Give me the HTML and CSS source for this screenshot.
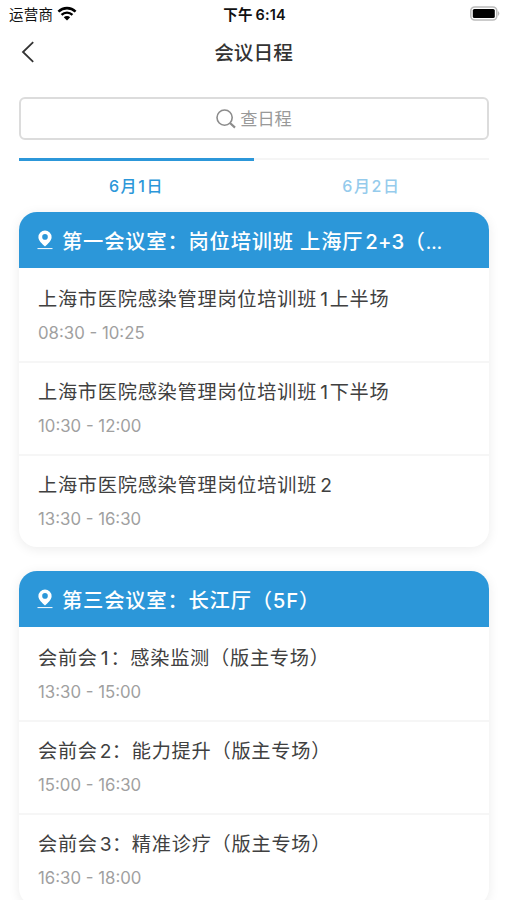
FILE: index.html
```html
<!DOCTYPE html>
<html lang="zh-CN">

<head>
    <meta charset="UTF-8">
    <meta name="viewport" content="width=device-width, initial-scale=1.0">
    <title>会议日程</title>
    <link rel="stylesheet" href="styles.css">
</head>

<body>
    <div class="status-bar">
        <div class="carrier">
            <span>运营商</span>
            <svg class="wifi" viewBox="0 0 18 14" width="20" height="15">
                <path d="M1 5.2 A11.5 11.5 0 0 1 17 5.2" fill="none" stroke="#000" stroke-width="2.4" />
                <path d="M3.9 8.2 A7.4 7.4 0 0 1 14.1 8.2" fill="none" stroke="#000" stroke-width="2.2" />
                <path d="M9 13.6 L6 10.5 A4.3 4.3 0 0 1 12 10.5 Z" />
            </svg>
        </div>
        <div class="clock">下午<span class="num">6:14</span></div>
        <svg class="battery" viewBox="0 0 31 15" width="31" height="15">
            <rect x="1.8" y="1" width="26" height="13" rx="4" fill="#fff" stroke="#bbb" stroke-width="1.6" />
            <rect x="3.8" y="3" width="22" height="9" rx="1.6" />
            <path d="M29.2 5 Q31.4 7.5 29.2 10 Z" fill="#aaa" />
        </svg>
    </div>

    <header class="nav-bar">
        <svg class="back" viewBox="0 0 14 22" width="14" height="22">
            <path d="M12.2 1.2 L2 11 L12.2 20.8" fill="none" stroke="#333" stroke-width="1.8" />
        </svg>
        <h1>会议日程</h1>
    </header>

    <main>
        <div class="search">
            <svg viewBox="0 0 20 20" width="20" height="20">
                <circle cx="8.6" cy="8.6" r="7.6" fill="none" stroke="#8c8c8c" stroke-width="1.6" />
                <path d="M14 14 L19 18.6" fill="none" stroke="#8c8c8c" stroke-width="2.2" />
            </svg>
            <span>查日程</span>
        </div>

        <div class="tabs">
            <div class="tab active">6<span class="cjk">月</span>1<span class="cjk">日</span></div>
            <div class="tab">6<span class="cjk">月</span>2<span class="cjk">日</span></div>
        </div>

        <section class="card">
            <h2>
                <svg class="pin" viewBox="0 0 16 20" width="16" height="20">
                    <path d="M8 0.6 A6.6 6.6 0 0 0 1.4 7.2 C1.4 10.8 5.2 13.6 8 16.6 C10.8 13.6 14.6 10.8 14.6 7.2 A6.6 6.6 0 0 0 8 0.6 Z M8 4.1 A2.8 2.8 0 1 1 8 9.7 A2.8 2.8 0 1 1 8 4.1 Z" fill="#fff" fill-rule="evenodd" />
                    <path d="M0.5 18.6 H15.5" stroke="#fff" stroke-width="1" />
                </svg>
                <span>第一会议室：岗位培训班 上海厅<span class="num">2+3</span>（<span class="dots">…</span></span>
            </h2>
            <div class="item">
                <h3>上海市医院感染管理岗位培训班<span class="num">1</span>上半场</h3>
                <p>08:30 - 10:25</p>
            </div>
            <div class="item">
                <h3>上海市医院感染管理岗位培训班<span class="num">1</span>下半场</h3>
                <p>10:30 - 12:00</p>
            </div>
            <div class="item">
                <h3>上海市医院感染管理岗位培训班<span class="num">2</span></h3>
                <p>13:30 - 16:30</p>
            </div>
        </section>

        <section class="card">
            <h2>
                <svg class="pin" viewBox="0 0 16 20" width="16" height="20">
                    <path d="M8 0.6 A6.6 6.6 0 0 0 1.4 7.2 C1.4 10.8 5.2 13.6 8 16.6 C10.8 13.6 14.6 10.8 14.6 7.2 A6.6 6.6 0 0 0 8 0.6 Z M8 4.1 A2.8 2.8 0 1 1 8 9.7 A2.8 2.8 0 1 1 8 4.1 Z" fill="#fff" fill-rule="evenodd" />
                    <path d="M0.5 18.6 H15.5" stroke="#fff" stroke-width="1" />
                </svg>
                <span>第三会议室：长江厅（5F）</span>
            </h2>
            <div class="item">
                <h3>会前会<span class="num">1</span>：感染监测（版主专场）</h3>
                <p>13:30 - 15:00</p>
            </div>
            <div class="item">
                <h3>会前会<span class="num wide">2</span>：能力提升（版主专场）</h3>
                <p>15:00 - 16:30</p>
            </div>
            <div class="item">
                <h3>会前会<span class="num wide">3</span>：精准诊疗（版主专场）</h3>
                <p>16:30 - 18:00</p>
            </div>
        </section>
    </main>
</body>

</html>
```
FILE: styles.css
```css
* {
    box-sizing: border-box;
}

body {
    margin: 0;
    height: 900px;
    overflow: hidden;
    background-color: #fff;
    font-family: Inter, "Noto Sans CJK SC", sans-serif;
    color: #404040;
}

h1,
h2,
h3,
p {
    margin: 0;
    font-weight: 400;
    white-space: nowrap;
}

.status-bar {
    display: grid;
    grid-template-columns: 1fr auto 1fr;
    align-items: center;
    height: 26px;
    padding: 0 7px 0 9px;
    color: #111;
}

.carrier {
    display: flex;
    align-items: center;
    gap: 4px;
    font-size: 14.5px;
    letter-spacing: 0.3px;
}

.clock {
    font-size: 14.5px;
    font-weight: 600;
    letter-spacing: 0.1px;
}

.clock .num {
    margin-left: 3px;
}

.battery {
    justify-self: end;
}

.nav-bar {
    display: grid;
    grid-template-columns: 1fr auto 1fr;
    align-items: center;
    height: 51px;
    padding: 0 21px;
}

.nav-bar h1 {
    font-size: 19.7px;
    font-weight: 500;
    color: #333;
}

main {
    padding: 20px 18px 0 19px;
}

.search {
    display: flex;
    align-items: center;
    justify-content: center;
    gap: 4px;
    height: 43px;
    border: 2px solid #dcdcdc;
    border-radius: 6px;
    font-size: 17.2px;
    line-height: 22px;
    color: #999;
}

.tabs {
    display: flex;
    margin-top: 18px;
    height: 54px;
}

.tab {
    flex: 1;
    padding-top: 16px;
    border-top: 2px solid #f5f5f5;
    text-align: center;
    font-size: 16px;
    line-height: 20px;
    font-weight: 500;
    letter-spacing: 0.6px;
    color: #95cbec;
}

.tab.active {
    border-top: 3px solid #2c97d9;
    padding-top: 15px;
    color: #2c97d9;
}

.tab .cjk {
    margin: 0 1px;
}

.card {
    margin-bottom: 24px;
    border-radius: 18px;
    background-color: #fff;
    box-shadow: 0 2px 12px rgba(0, 0, 0, 0.08);
}

.card h2 {
    display: flex;
    align-items: center;
    gap: 9px;
    height: 56px;
    padding-left: 18px;
    border-radius: 18px 18px 0 0;
    background-color: #2c97d9;
    color: #fff;
    font-size: 20.3px;
    font-weight: 500;
    letter-spacing: 0.8px;
}

.card h2 .num {
    margin-left: 2px;
    letter-spacing: 0.2px;
}

.card h2 .dots {
    font-size: 18px;
    letter-spacing: 0;
}

.item {
    height: 93px;
    padding: 17px 19px 0;
}

.item + .item {
    border-top: 2px solid #f6f6f6;
    padding-top: 15px;
}

.item h3 {
    font-size: 19.2px;
    line-height: 28px;
    letter-spacing: 0.75px;
}

.item .num {
    margin: 0 1px 0 3px;
}

.item .num.wide {
    margin: 0 -0.5px 0 2px;
}

.item p {
    margin-top: 9px;
    font-size: 16.8px;
    line-height: 22px;
    color: #a0a0a0;
}
```
